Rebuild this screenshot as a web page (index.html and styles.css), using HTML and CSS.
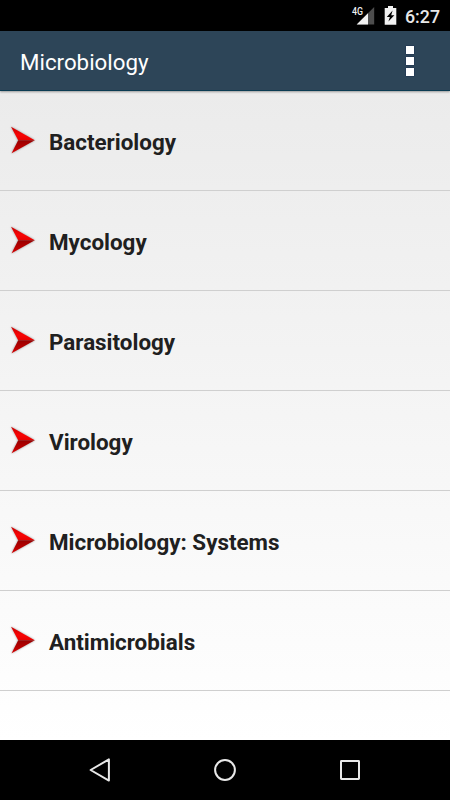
FILE: index.html
```html
<!DOCTYPE html>
<html lang="en">
<head>
<meta charset="utf-8">
<title>Microbiology</title>
<link rel="stylesheet" href="styles.css">
</head>
<body>
<svg class="defs" width="0" height="0" aria-hidden="true">
  <defs>
    <linearGradient id="upper" x1="0" y1="0" x2="0" y2="1"><stop offset="0" stop-color="#c80000"/><stop offset=".6" stop-color="#f80404"/><stop offset="1" stop-color="#e80000"/></linearGradient>
    <linearGradient id="lower" x1="0" y1="0" x2="0" y2="1"><stop offset="0" stop-color="#980000"/><stop offset="1" stop-color="#d40000"/></linearGradient>
    <symbol id="arrow" viewBox="0 0 28 30">
      <path d="M3 1.8 26.8 15.3H10.2Z" fill="url(#upper)"/>
      <path d="M10.2 15.3H26.8L3.6 28.2Z" fill="url(#lower)"/>
    </symbol>
  </defs>
</svg>
<div class="screen">
  <div class="status">
    <svg class="signal" width="24" height="20" viewBox="0 0 24 20">
      <path d="M23.2 2V19.5H5.7Z" fill="#4d4d4d"/>
      <path d="M17 8.2V19.5H5.7Z" fill="#f2f2f2"/>
      <text class="network" x="1" y="9.6" textLength="11" lengthAdjust="spacingAndGlyphs">4G</text>
    </svg>
    <svg class="battery" width="13" height="19" viewBox="0 0 13 19">
      <path d="M.7 2H4V0h5v2h3.3v16.8H.7Z" fill="#f2f2f2"/>
      <path d="M8.6 4.6 2.8 11H5.9L4.4 15.6 10.4 9.2H7.2Z" fill="#000"/>
    </svg>
    <span class="clock">6:27</span>
  </div>
  <header class="bar">
    <h1 class="title">Microbiology</h1>
    <div class="more"><i class="dot"></i><i class="dot"></i><i class="dot"></i></div>
  </header>
  <ul class="list">
    <li class="row"><svg class="arrow"><use href="#arrow"/></svg><span class="label">Bacteriology</span></li>
    <li class="row"><svg class="arrow"><use href="#arrow"/></svg><span class="label">Mycology</span></li>
    <li class="row"><svg class="arrow"><use href="#arrow"/></svg><span class="label">Parasitology</span></li>
    <li class="row"><svg class="arrow"><use href="#arrow"/></svg><span class="label">Virology</span></li>
    <li class="row"><svg class="arrow"><use href="#arrow"/></svg><span class="label">Microbiology: Systems</span></li>
    <li class="row"><svg class="arrow"><use href="#arrow"/></svg><span class="label">Antimicrobials</span></li>
  </ul>
  <nav class="nav">
    <svg width="26" height="26" viewBox="0 0 26 26"><path d="M21.9 2.4V23.6L3.6 13Z"/></svg>
    <svg width="26" height="26" viewBox="0 0 26 26"><circle cx="13" cy="13" r="9.9"/></svg>
    <svg width="26" height="26" viewBox="0 0 26 26"><rect x="4" y="4" width="18" height="18" rx=".4"/></svg>
  </nav>
</div>
</body>
</html>
```
FILE: styles.css
```css
* { box-sizing: border-box; }
body { margin: 0; font-family: Roboto, sans-serif; }
.defs { position: absolute; }
.screen { display: flex; flex-direction: column; width: 450px; height: 800px; overflow: hidden; }
.status {
  display: flex;
  align-items: flex-start;
  height: 31px;
  padding: 5px 0 0 351px;
  background: #000;
  color: #e8e8e8;
}
.signal, .battery { flex: none; }
.network { font-size: 11px; font-weight: 500; fill: #f0f0f0; }
.battery { margin: 1px 0 0 9px; }
.clock { margin-left: 8px; font-size: 17.8px; font-weight: 500; line-height: 23px; white-space: nowrap; }
.bar {
  display: flex;
  align-items: center;
  justify-content: space-between;
  height: 60px;
  padding: 0 36px 0 20px;
  background: #2d4558;
  border-bottom: 1px solid #0b3b52;
  box-shadow: 0 1px 2px rgba(0, 0, 0, .35);
  z-index: 1;
}
.title { margin: 3px 0 0; font-size: 22.3px; font-weight: 400; line-height: 28px; color: #fff; }
.more { display: flex; flex-direction: column; gap: 3px; margin-top: 1px; }
.dot { width: 8px; height: 8px; background: #fff; box-shadow: 0 0 1px #001040; }
.list {
  flex: 1;
  margin: 0;
  padding: 0;
  list-style: none;
  background: linear-gradient(#ebebeb, #fff);
}
.row {
  display: flex;
  align-items: center;
  height: 100px;
  padding-left: 8px;
  border-bottom: 1px solid #cfcfcf;
}
.arrow { width: 28px; height: 30px; margin-top: -1px; filter: drop-shadow(0 0 1px rgba(0, 0, 0, .4)); }
.label { margin: 2px 0 0 13px; font-size: 22.4px; font-weight: 700; line-height: 28px; color: #202020; }
.nav {
  display: flex;
  align-items: center;
  justify-content: space-between;
  height: 60px;
  padding: 0 87px;
  background: #000;
}
.nav svg { fill: none; stroke: #e8e8e8; stroke-width: 2; stroke-linejoin: round; }
```
